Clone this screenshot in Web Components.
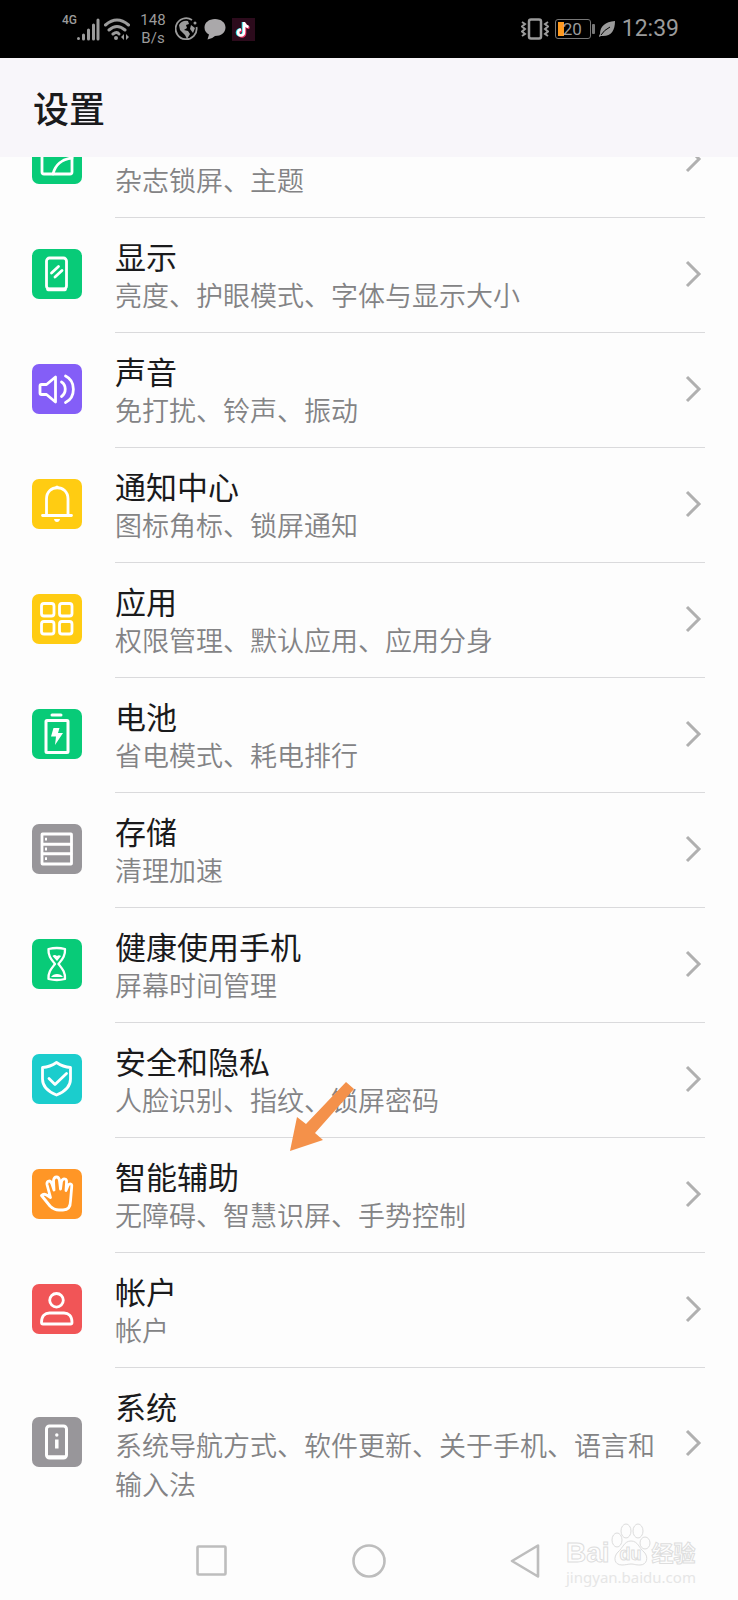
<!DOCTYPE html>
<html lang="zh-CN">
<head>
<meta charset="utf-8">
<meta name="viewport" content="width=device-width, initial-scale=1">
<title>设置</title>
<style>
  body { margin: 0; background: #fdfdfd; color: #1a1a1c; font-family: Roboto, "Noto Sans CJK SC", sans-serif; }
</style>
</head>
<body>
<settings-screen>
  <status-bar slot="top"></status-bar>
  <page-header slot="top">设置</page-header>
  <settings-item icon="picture" color="#08cb78" cut>
    <span slot="summary">杂志锁屏、主题</span>
  </settings-item>
  <settings-item icon="display" color="#08cb78">显示<span slot="summary">亮度、护眼模式、字体与显示大小</span></settings-item>
  <settings-item icon="sound" color="#845ef7">声音<span slot="summary">免打扰、铃声、振动</span></settings-item>
  <settings-item icon="bell" color="#ffcc12">通知中心<span slot="summary">图标角标、锁屏通知</span></settings-item>
  <settings-item icon="apps" color="#ffcc12">应用<span slot="summary">权限管理、默认应用、应用分身</span></settings-item>
  <settings-item icon="battery" color="#08cb78">电池<span slot="summary">省电模式、耗电排行</span></settings-item>
  <settings-item icon="storage" color="#98969a">存储<span slot="summary">清理加速</span></settings-item>
  <settings-item icon="hourglass" color="#08cb78">健康使用手机<span slot="summary">屏幕时间管理</span></settings-item>
  <settings-item icon="shield" color="#1bcdcd">安全和隐私<span slot="summary">人脸识别、指纹、锁屏密码</span></settings-item>
  <settings-item icon="hand" color="#ff9626">智能辅助<span slot="summary">无障碍、智慧识屏、手势控制</span><pointer-arrow slot="mark"></pointer-arrow></settings-item>
  <settings-item icon="person" color="#f15557">帐户<span slot="summary">帐户</span></settings-item>
  <settings-item icon="system" color="#98969a" last>系统<span slot="summary">系统导航方式、软件更新、关于手机、语言和输入法</span></settings-item>
  <nav-bar slot="bottom"></nav-bar>
  <site-mark slot="bottom"></site-mark>
</settings-screen>

<script>
const define = (name, html, setup) => {
  const template = document.createElement('template');
  template.innerHTML = html;
  customElements.define(name, class extends HTMLElement {
    constructor() {
      super();
      this.attachShadow({ mode: 'open' }).append(template.content.cloneNode(true));
    }
    connectedCallback() { if (setup) setup(this, this.shadowRoot); }
  });
};

const ICONS = {
  picture: '<rect x="10" y="10" width="30" height="30" rx="2"/><path d="M21 40C23 31 30 25 40 24M16 17c2 3 5 2 6 0"/>',
  display: '<rect x="14.500" y="9" width="20" height="31" rx="3"/><path d="M16 40.500h17" stroke-width="3.500"/><path d="M19.500 24l7-6.500M23 28l7-6.500"/>',
  sound: '<path d="M8 22q0-1.500 1.500-1.500h5L23.500 13v25L14.500 30.500h-5Q8 30.500 8 29Z"/><path d="M29.500 18c5 3 5 11 0 14.500M33.500 12c10.500 5 10.500 21.500 0 26.500"/>',
  bell: '<path d="M14.500 36V20C14.500 5 36 5 36 20v16M10.500 36.500h29"/><path d="M22 40h6q-.5 3-3 3t-3-3M23 8q2-3 4 0Z" fill="#fff" stroke="none"/>',
  apps: '<rect x="9.500" y="9.500" width="12.500" height="12.500" rx="2.500"/><rect x="27.500" y="9.500" width="12.500" height="12.500" rx="2.500"/><rect x="9.500" y="27.500" width="12.500" height="12.500" rx="2.500"/><rect x="27.500" y="27.500" width="12.500" height="12.500" rx="2.500"/>',
  battery: '<rect x="14" y="11.500" width="22" height="32" rx="1" stroke-width="3"/><path d="M20 6h9" stroke-width="3"/><path d="M21.500 19h6l-1.500 5h5L23 36l1-8.500h-5Z" fill="#fff" stroke="none"/>',
  storage: '<rect x="10" y="10" width="29.500" height="30" rx=".5"/><path d="M11 20.200h28M11 29.800h28" stroke-width="3"/><path d="M13 15.200h2M13 25h2M13 34.700h2" stroke-linecap="butt"/>',
  hourglass: '<path d="M16.500 10Q25 8 33 10C33.500 17 30 20.500 26.500 25C30 29.500 33.500 33 33 40Q25 42 16.500 40C16 33 19.500 29.500 23 25C19.500 20.500 16 17 16.500 10Z" stroke-width="2.300"/><path d="M20.500 17q2-2 4.500 0 2-1.500 4 0L25 22ZM19 38q2-3 6-3t6 3Z" fill="#fff" stroke="none"/>',
  shield: '<path d="M24.500 8.500Q31 13 38.500 13.500V25C38.500 33 32 38 24.500 41 17 38 10.500 33 10.500 25V13.500Q18 13 24.500 8.500Z"/><path d="M17 24.500l6 6L34.500 19.500"/>',
  hand: '<path d="M9.500 26.500Q12 24 15.500 26.500L18.500 28.500 15 15.500Q14.500 12.500 17 12 19 12 20 15L22 21 21.500 11.500Q22 8 24.500 8 27 8 27.500 11.500L28.500 20 29.500 12.500Q30.500 9.500 33 10 35 10.500 34.500 13.500L34 21.500 36 16.500Q37.500 14 39.500 15.500 40 16 39.700 18L38.500 32Q38.500 41 31 41H27Q22 41 18 37Z"/>',
  person: '<circle cx="24.500" cy="16.300" r="6.800"/><path d="M9.500 38.500C9.500 32 13 29 17.500 29h14.500c4.500 0 8 3 8 9.500q0 1.500-1.500 1.500H11Q9.500 40 9.500 38.500Z"/>',
  system: '<rect x="14.500" y="9" width="20" height="32" rx="3" stroke-width="3"/><path d="M16 40h17M24.800 22.500v9" stroke-width="3.500" stroke-linecap="butt"/><circle cx="24.800" cy="18" r="1.700" fill="#fff" stroke="none"/>'
};

define('settings-screen', `
  <style>
    :host { display: flex; flex-direction: column; min-height: 100vh; position: relative; }
    main { display: flex; flex-direction: column; }
  </style>
  <slot name="top"></slot><main><slot></slot></main><slot name="bottom"></slot>`);

define('status-bar', `
  <style>
    :host { display: flex; justify-content: space-between; align-items: center; height: 58px; box-sizing: border-box; padding: 0 59px 0 62px; background: #000; color: #9b9b9b; }
    .group { display: flex; align-items: center; }
    svg { display: block; fill: none; stroke: #9b9b9b; }
    .net { width: 14px; font-size: 12px; line-height: 14px; font-weight: 500; align-self: flex-start; margin-top: 2px; }
    .signal { margin-right: 4px; }
    .rate { width: 28px; margin: 0 8px 0 9px; font-size: 15px; line-height: 18px; text-align: center; }
    .globe, .bubble { margin-right: 6px; }
    .right { gap: 6px; }
    .battery { display: flex; align-items: center; box-sizing: border-box; width: 36px; height: 20px; border: 1px solid #777; border-radius: 3px; padding-left: 7px; margin-right: 2px; font-size: 17px; line-height: 18px; background: linear-gradient(#ff9b20, #ff9b20) 2px 2px / 6px 14px no-repeat; position: relative; }
    .battery::after { content: ""; position: absolute; right: -5px; top: 4px; width: 3px; height: 10px; background: #777; border-radius: 1px; }
    time { font-size: 23px; line-height: 28px; }
  </style>
  <div class="group left">
    <span class="net">4G</span>
    <svg class="signal" width="24" height="24" viewBox="0 0 24 24" stroke-width="3" stroke-linecap="round"><path d="M2.500 21.500v.1M7.500 18v4M12.500 13v9M17.500 8v14M22 3v19"/></svg>
    <svg width="26" height="24" viewBox="0 0 26 24" stroke-width="3" stroke-linecap="round"><path d="M1.500 8Q13-2 24.500 8M5 13q8-7 16 0M9 17q4-3 6 0"/><circle cx="12" cy="21" r="2" fill="#9b9b9b" stroke="none"/><path d="M20 17v6l-3-3zM22 17v6l3-3z" fill="#9b9b9b" stroke="none"/></svg>
    <div class="rate">148<br>B/s</div>
    <svg class="globe" width="23" height="24" viewBox="0 0 23 24"><path d="M17 3A10.500 10.500 0 1 0 21.500 10" stroke-width="1.800"/><path d="M4 8Q7 3 13 4l1 3-3 1 1 3-3 2 4 1 2 3-3 5-2-4-5-5zM16 8l4 3-2 5-3-4z" fill="#9b9b9b" stroke="none"/><circle cx="20" cy="6" r="1.500" fill="#9b9b9b" stroke="none"/></svg>
    <svg class="bubble" width="22" height="22" viewBox="0 0 22 22"><path d="M11 1C17 1 21.500 4.500 21.500 9.500S17 18 11 18Q8 21 3.500 21.500L5 16.500Q.5 14 .5 9.500C.5 4.500 5 1 11 1Z" fill="#aaa8aa" stroke="none"/></svg>
    <svg width="23" height="23" viewBox="0 0 23 23" stroke-width="2.600"><path d="M0 0h23v23H0z" fill="#2c0b1c" stroke="none"/><path d="M12 4v10.500a3 3 0 1 1-3-3M12 5q1 3 4.500 4" stroke="#25dfe3" transform="translate(-1 0)"/><path d="M12 4v10.500a3 3 0 1 1-3-3M12 5q1 3 4.500 4" stroke="#e73462" transform="translate(1 1)"/><path d="M12 4v10.500a3 3 0 1 1-3-3M12 5q1 3 4.500 4" stroke="#fff"/></svg>
  </div>
  <div class="group right">
    <svg width="28" height="22" viewBox="0 0 28 22" stroke-width="2"><rect x="8" y="1.500" width="12" height="19" rx="2" stroke-width="2.500"/><path d="M1 4l3 2-3 2.500 3 2.500-3 2.500 3 2.500-3 2M27 4l-3 2 3 2.500-3 2.500 3 2.500-3 2.500 3 2"/></svg>
    <div class="battery">20</div>
    <svg width="17" height="18" viewBox="0 0 17 18"><path d="M16 1C6 2 1 6 1 14Q0 15 0 17l2-1C12 17 16 11 16 1Z" fill="#9b9b9b" stroke="none"/><path d="M2 15q3-5 9-8" stroke="#000"/></svg>
    <time>12:39</time>
  </div>`);

define('page-header', `
  <style>
    :host { display: block; background: #f8f6fa; }
    h1 { margin: 0; padding: 27px 33px 20px; font-size: 36px; line-height: 52px; font-weight: 500; }
  </style>
  <h1><slot></slot></h1>`);

define('app-icon', `
  <style>
    :host { display: block; width: 50px; height: 50px; border-radius: 7px; flex: none; }
    svg { display: block; fill: none; stroke: #fff; stroke-width: 2.8; stroke-linejoin: round; stroke-linecap: round; }
  </style>
  <svg width="50" height="50" viewBox="0 0 50 50" aria-hidden="true"></svg>`,
  (host, root) => {
    root.querySelector('svg').innerHTML = ICONS[host.getAttribute('name')];
    host.style.background = host.getAttribute('color');
  });

define('settings-item', `
  <style>
    :host { display: block; position: relative; }
    :host([cut]) { display: flex; flex-direction: column; justify-content: flex-end; height: 61px; overflow: hidden; }
    a { display: flex; align-items: center; gap: 33px; padding: 0 33px 0 32px; color: inherit; text-decoration: none; }
    app-icon { margin-bottom: 4px; }
    .body { flex: 1; display: flex; align-items: center; gap: 12px; border-bottom: 1px solid #dadadc; }
    .text { flex: 1; padding: 21px 0 15px; }
    :host([last]) .text { padding-bottom: 14px; }
    :host([last]) .body { border-bottom: 0; }
    .title { min-height: 39px; font-size: 31px; line-height: 39px; }
    .summary { font-size: 27px; line-height: 39px; color: #838385; font-weight: 350; }
    .chevron { display: block; flex: none; margin-bottom: 2px; fill: none; stroke: #b0b0b0; stroke-width: 3; }
  </style>
  <a href="#">
    <app-icon></app-icon>
    <div class="body">
      <div class="text"><div class="title"><slot></slot></div><div class="summary"><slot name="summary"></slot></div></div>
      <svg class="chevron" width="20" height="28" viewBox="0 0 20 28" aria-hidden="true"><path d="M2 2l12 12L2 26"/></svg>
    </div>
  </a>
  <slot name="mark"></slot>`,
  (host, root) => {
    const old = root.querySelector('app-icon');
    const icon = document.createElement('app-icon');
    icon.setAttribute('name', host.getAttribute('icon'));
    icon.setAttribute('color', host.getAttribute('color'));
    old.replaceWith(icon);
  });

define('pointer-arrow', `
  <style>
    :host { position: absolute; left: 290px; top: -56px; pointer-events: none; }
    svg { display: block; }
  </style>
  <svg width="66" height="70" viewBox="0 0 66 70" aria-hidden="true"><path d="M0 69L7 35l9 7L56 0l8 7-39 44 8 7Z" fill="#f4914a"/></svg>`);

define('nav-bar', `
  <style>
    :host { display: flex; justify-content: center; align-items: center; flex: 1; min-height: 81px; }
    button { display: flex; justify-content: center; width: 157px; padding: 12px 0; border: 0; background: none; }
    svg { fill: none; stroke: #bdbdbd; stroke-width: 2.6; stroke-linejoin: round; }
  </style>
  <button aria-label="最近任务"><svg width="34" height="34" viewBox="0 0 34 34"><rect x="2.500" y="2.500" width="28" height="28" rx="1"/></svg></button>
  <button aria-label="主屏幕"><svg width="34" height="34" viewBox="0 0 34 34"><circle cx="17" cy="17" r="15.500"/></svg></button>
  <button aria-label="返回"><svg width="34" height="34" viewBox="0 0 34 34"><path d="M3 17L29 1.500v31Z"/></svg></button>`);

define('site-mark', `
  <style>
    :host { position: absolute; right: 40px; bottom: 14px; width: 132px; color: #fdfdfd; pointer-events: none; }
    .brand { display: flex; align-items: flex-end; gap: 1px; font-family: "Liberation Sans", "Noto Sans CJK SC", sans-serif; font-weight: 700; -webkit-text-stroke: 1px #dedede; }
    .name { font-size: 28px; line-height: 28px; }
    .paw { display: grid; place-items: end center; width: 40px; height: 44px; }
    .paw > * { grid-area: 1 / 1; }
    .paw svg { fill: #fdfdfd; stroke: #dcdcdc; }
    .du { font-size: 18px; line-height: 26px; }
    .topic { font-size: 22px; line-height: 26px; white-space: nowrap; }
    .url { font: 15px/20px "Noto Sans", sans-serif; color: #e6e6e6; }
  </style>
  <div class="brand">
    <span class="name">Bai</span>
    <span class="paw">
      <svg width="40" height="44" viewBox="0 0 40 44" aria-hidden="true"><ellipse cx="6" cy="17" rx="5" ry="7"/><ellipse cx="15" cy="8" rx="5" ry="7"/><ellipse cx="27" cy="8" rx="5" ry="7"/><ellipse cx="34" cy="20" rx="5" ry="6"/><path d="M20 18C27 18 28 25 33 29 38 34 36 42 29 42 24 42 23 41 20 41S15 42 11 42C3 42 2 34 7 29 12 25 13 18 20 18Z"/></svg>
      <span class="du">du</span>
    </span>
    <span class="topic">经验</span>
  </div>
  <div class="url">jingyan.baidu.com</div>`);
</script>
</body>
</html>
